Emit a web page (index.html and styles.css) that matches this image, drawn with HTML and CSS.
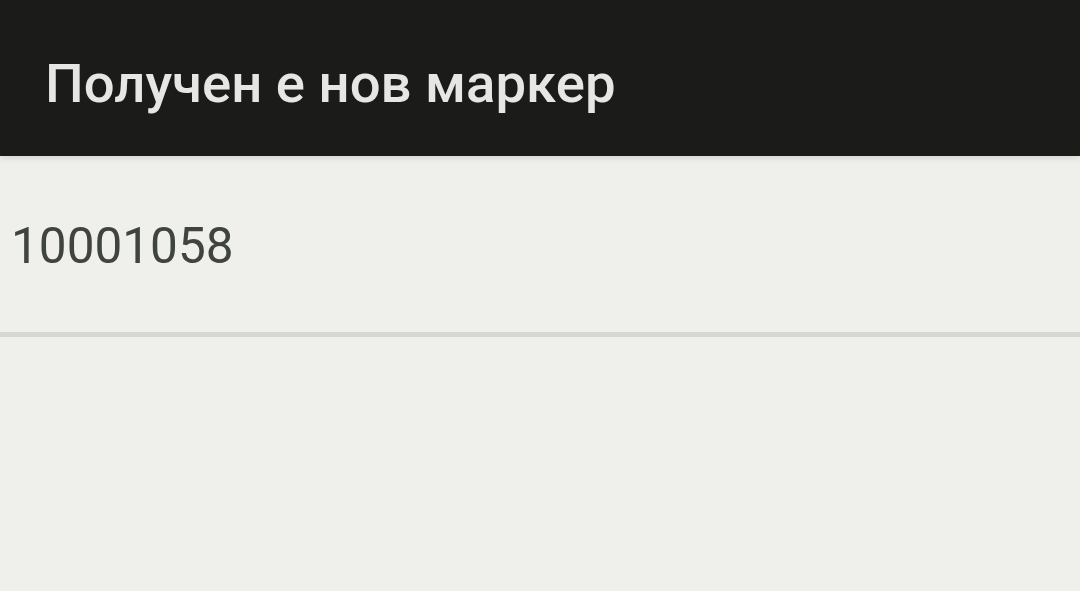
FILE: index.html
```html
<!DOCTYPE html>
<html lang="bg">
  <head>
    <meta charset="UTF-8" />
    <meta name="viewport" content="width=device-width, initial-scale=1.0" />
    <title>Получен е нов маркер</title>
    <link rel="stylesheet" href="styles.css">
  </head>
  <body>
    <div class="header">Получен е нов маркер</div>
    <div class="content">
      <div class="marker">10001058</div>
      <div class="divider"></div>
    </div>
  </body>
</html>
```

FILE: styles.css
```css
body {
  font-family: "Roboto", "Liberation Sans", sans-serif;
  background-color: #eff0eb;
  margin: 0;
  padding: 0;
}

.header {
  background-color: #1b1c1a;
  color: #e6e6e4;
  height: 156px;
  box-sizing: border-box;
  padding: 51px 0 0 45px;
  font-size: 54.5px;
  font-weight: 500;
  line-height: 64px;
  box-shadow: 0 2px 6px rgba(0, 0, 0, 0.12);
  position: relative;
}

.marker {
  height: 176px;
  box-sizing: border-box;
  padding: 4px 0 0 11px;
  display: flex;
  align-items: center;
  font-size: 49.5px;
  color: #40443e;
}

.divider {
  height: 5px;
  background-color: #d6d7d2;
}
```
